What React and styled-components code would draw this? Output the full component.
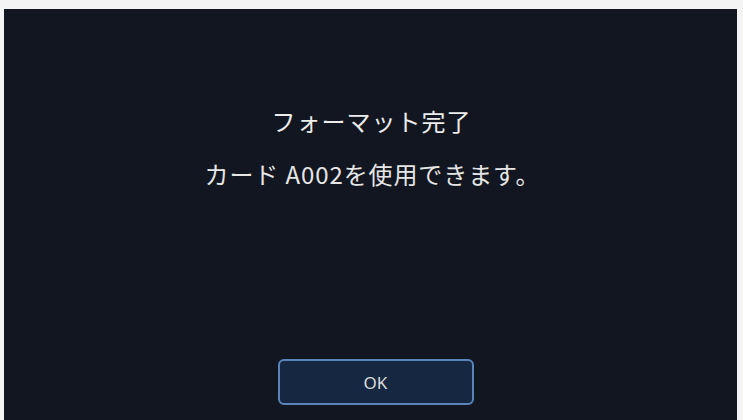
import React from "react";
import styled, { createGlobalStyle } from "styled-components";

const GlobalStyle = createGlobalStyle`
  html, body {
    margin: 0;
    padding: 0;
    background: #f4f4f4;
  }
  body {
    font-family: "Noto Sans CJK JP", "Noto Sans", sans-serif;
  }
`;

const Frame = styled.div`
  width: 743px;
  height: 420px;
  box-sizing: border-box;
  padding: 9px 6px 0 4px;
  display: flex;
`;

const Screen = styled.div`
  flex: 1;
  background: #121620;
  display: flex;
  flex-direction: column;
  align-items: center;
  padding-top: 96px;
  box-sizing: border-box;
`;

const Title = styled.div`
  color: #ececec;
  font-size: 24px;
  line-height: 32px;
  letter-spacing: 1px;
  transform: translateX(1px);
`;

const Message = styled.div`
  margin-top: 21px;
  color: #e6e6e6;
  font-size: 24px;
  line-height: 32px;
  letter-spacing: 0.9px;
  transform: translateX(2px);
`;

const Spacer = styled.div`
  flex: 1;
`;

const OkButton = styled.button`
  width: 196px;
  height: 46px;
  margin: 0 0 15px 10px;
  box-sizing: border-box;
  background: #162841;
  border: 2px solid #5883bb;
  border-radius: 6px;
  color: #dcdcdc;
  font-family: "Noto Sans", sans-serif;
  font-size: 17px;
  cursor: pointer;
`;

export default function App() {
  return (
    <>
      <GlobalStyle />
      <Frame>
        <Screen>
          <Title>フォーマット完了</Title>
          <Message>カード A002を使用できます。</Message>
          <Spacer />
          <OkButton>OK</OkButton>
        </Screen>
      </Frame>
    </>
  );
}
